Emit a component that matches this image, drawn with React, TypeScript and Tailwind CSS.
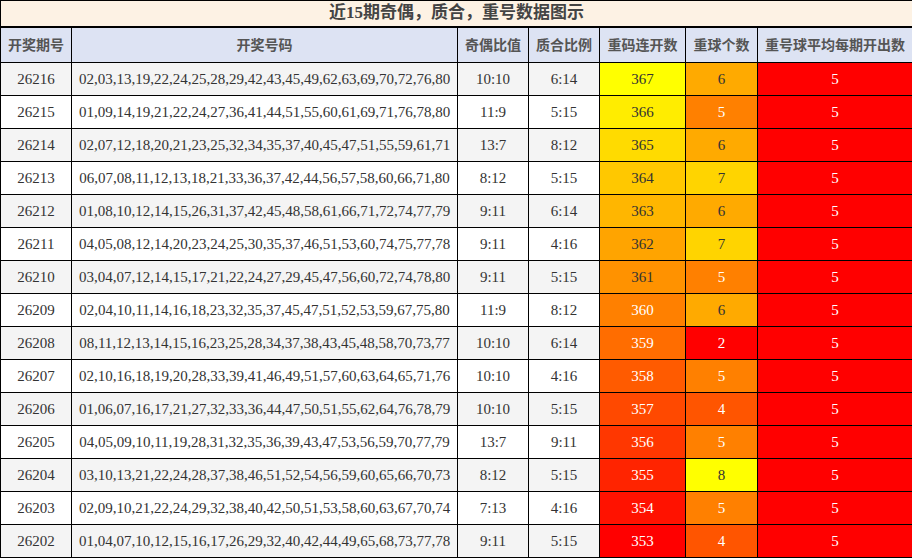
const HEADERS = ['开奖期号', '开奖号码', '奇偶比值', '质合比例', '重码连开数', '重球个数', '重号球平均每期开出数']

type Row = {
  issue: string
  nums: string
  oddEven: string
  primeRatio: string
  streak: number
  repeat: number
}

const ROWS: Row[] = [
  { issue: '26216', nums: '02,03,13,19,22,24,25,28,29,42,43,45,49,62,63,69,70,72,76,80', oddEven: '10:10', primeRatio: '6:14', streak: 367, repeat: 6 },
  { issue: '26215', nums: '01,09,14,19,21,22,24,27,36,41,44,51,55,60,61,69,71,76,78,80', oddEven: '11:9', primeRatio: '5:15', streak: 366, repeat: 5 },
  { issue: '26214', nums: '02,07,12,18,20,21,23,25,32,34,35,37,40,45,47,51,55,59,61,71', oddEven: '13:7', primeRatio: '8:12', streak: 365, repeat: 6 },
  { issue: '26213', nums: '06,07,08,11,12,13,18,21,33,36,37,42,44,56,57,58,60,66,71,80', oddEven: '8:12', primeRatio: '5:15', streak: 364, repeat: 7 },
  { issue: '26212', nums: '01,08,10,12,14,15,26,31,37,42,45,48,58,61,66,71,72,74,77,79', oddEven: '9:11', primeRatio: '6:14', streak: 363, repeat: 6 },
  { issue: '26211', nums: '04,05,08,12,14,20,23,24,25,30,35,37,46,51,53,60,74,75,77,78', oddEven: '9:11', primeRatio: '4:16', streak: 362, repeat: 7 },
  { issue: '26210', nums: '03,04,07,12,14,15,17,21,22,24,27,29,45,47,56,60,72,74,78,80', oddEven: '9:11', primeRatio: '5:15', streak: 361, repeat: 5 },
  { issue: '26209', nums: '02,04,10,11,14,16,18,23,32,35,37,45,47,51,52,53,59,67,75,80', oddEven: '11:9', primeRatio: '8:12', streak: 360, repeat: 6 },
  { issue: '26208', nums: '08,11,12,13,14,15,16,23,25,28,34,37,38,43,45,48,58,70,73,77', oddEven: '10:10', primeRatio: '6:14', streak: 359, repeat: 2 },
  { issue: '26207', nums: '02,10,16,18,19,20,28,33,39,41,46,49,51,57,60,63,64,65,71,76', oddEven: '10:10', primeRatio: '4:16', streak: 358, repeat: 5 },
  { issue: '26206', nums: '01,06,07,16,17,21,27,32,33,36,44,47,50,51,55,62,64,76,78,79', oddEven: '10:10', primeRatio: '5:15', streak: 357, repeat: 4 },
  { issue: '26205', nums: '04,05,09,10,11,19,28,31,32,35,36,39,43,47,53,56,59,70,77,79', oddEven: '13:7', primeRatio: '9:11', streak: 356, repeat: 5 },
  { issue: '26204', nums: '03,10,13,21,22,24,28,37,38,46,51,52,54,56,59,60,65,66,70,73', oddEven: '8:12', primeRatio: '5:15', streak: 355, repeat: 8 },
  { issue: '26203', nums: '02,09,10,21,22,24,29,32,38,40,42,50,51,53,58,60,63,67,70,74', oddEven: '7:13', primeRatio: '4:16', streak: 354, repeat: 5 },
  { issue: '26202', nums: '01,04,07,10,12,15,16,17,26,29,32,40,42,44,49,65,68,73,77,78', oddEven: '9:11', primeRatio: '5:15', streak: 353, repeat: 4 },
]

// 重码连开数：黄 → 红
const STREAK_BG = [
  'bg-[#ffff00] text-[#333]',
  'bg-[#ffed00] text-[#333]',
  'bg-[#ffdb00] text-[#333]',
  'bg-[#ffc800] text-[#333]',
  'bg-[#ffb600] text-[#333]',
  'bg-[#ffa400] text-[#333]',
  'bg-[#ff9200] text-[#333]',
  'bg-[#ff8000] text-white',
  'bg-[#ff6d00] text-white',
  'bg-[#ff5b00] text-white',
  'bg-[#ff4900] text-white',
  'bg-[#ff3700] text-white',
  'bg-[#ff2400] text-white',
  'bg-[#ff1200] text-white',
  'bg-[#ff0000] text-white',
]

const REPEAT_BG: Record<number, string> = {
  8: 'bg-[#ffff00] text-[#333]',
  7: 'bg-[#ffd400] text-[#333]',
  6: 'bg-[#ffaa00] text-[#333]',
  5: 'bg-[#ff8000] text-white',
  4: 'bg-[#ff5500] text-white',
  3: 'bg-[#ff2b00] text-white',
  2: 'bg-[#ff0000] text-white',
}

const cell = 'border border-black text-center p-0'

export default function App() {
  return (
    <div className="w-[912px] h-[558px] overflow-hidden bg-white font-['Liberation_Serif','Noto_Sans_CJK_SC',serif] text-[15px] text-[#333]">
      <table className="w-[912px] table-fixed border-collapse">
        <colgroup>
          <col className="w-[71px]" />
          <col className="w-[386px]" />
          <col className="w-[71px]" />
          <col className="w-[71px]" />
          <col className="w-[86px]" />
          <col className="w-[72px]" />
          <col className="w-[155px]" />
        </colgroup>
        <thead>
          {/* 标题 */}
          <tr className="h-[26px]">
            <th
              colSpan={7}
              className="border border-black border-b-2 bg-[#fdf2e4] p-0 text-center text-[17px] leading-[24px] font-bold text-[#444]"
            >
              近15期奇偶，质合，重号数据图示
            </th>
          </tr>
          {/* 表头 */}
          <tr className="h-[36px]">
            {HEADERS.map((h) => (
              <th
                key={h}
                className={`${cell} bg-[#dde3f3] font-['Noto_Sans_CJK_SC',sans-serif] text-[14px] font-bold text-[#555]`}
              >
                {h}
              </th>
            ))}
          </tr>
        </thead>
        <tbody>
          {ROWS.map((r, i) => (
            <tr key={r.issue} className={`h-[33px] ${i % 2 === 0 ? 'bg-[#f4f4f4]' : 'bg-white'}`}>
              <td className={cell}>{r.issue}</td>
              <td className={cell}>{r.nums}</td>
              <td className={cell}>{r.oddEven}</td>
              <td className={cell}>{r.primeRatio}</td>
              <td className={`${cell} ${STREAK_BG[i]}`}>{r.streak}</td>
              <td className={`${cell} ${REPEAT_BG[r.repeat]}`}>{r.repeat}</td>
              <td className={`${cell} bg-[#ff0000] text-white`}>5</td>
            </tr>
          ))}
        </tbody>
      </table>
    </div>
  )
}
